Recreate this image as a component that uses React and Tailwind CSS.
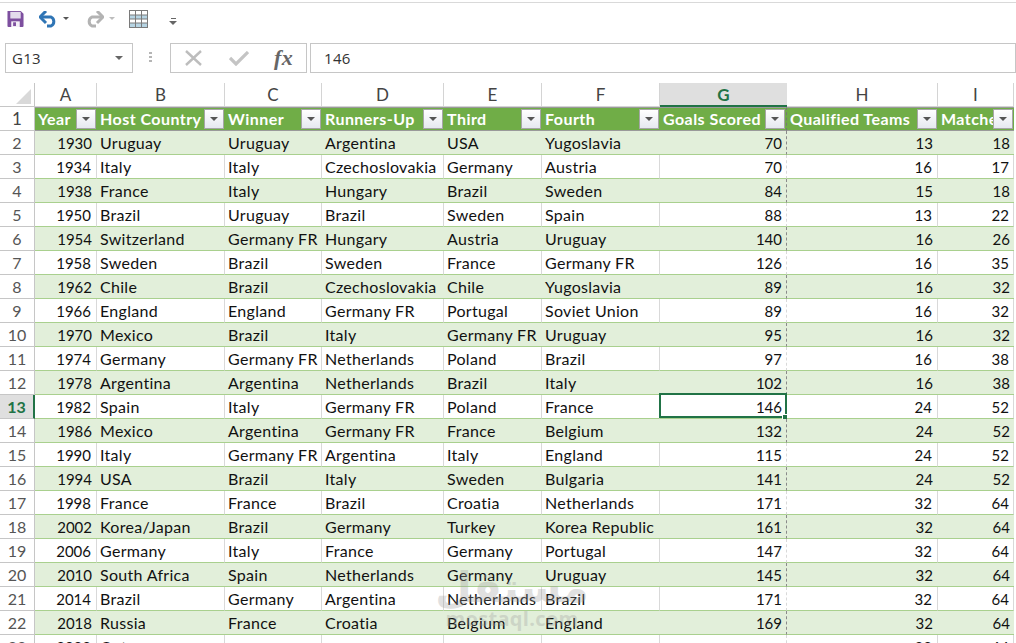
import React from 'react';

const columns = ['A', 'B', 'C', 'D', 'E', 'F', 'G', 'H', 'I'];
const headers = ['Year', 'Host Country', 'Winner', 'Runners-Up', 'Third', 'Fourth', 'Goals Scored', 'Qualified Teams', 'Matches'];
const gridCols = 'grid grid-cols-[35px_62px_128px_97px_122px_98px_118px_127px_151px_76px]';

const rows = [
  [1930, 'Uruguay', 'Uruguay', 'Argentina', 'USA', 'Yugoslavia', 70, 13, 18],
  [1934, 'Italy', 'Italy', 'Czechoslovakia', 'Germany', 'Austria', 70, 16, 17],
  [1938, 'France', 'Italy', 'Hungary', 'Brazil', 'Sweden', 84, 15, 18],
  [1950, 'Brazil', 'Uruguay', 'Brazil', 'Sweden', 'Spain', 88, 13, 22],
  [1954, 'Switzerland', 'Germany FR', 'Hungary', 'Austria', 'Uruguay', 140, 16, 26],
  [1958, 'Sweden', 'Brazil', 'Sweden', 'France', 'Germany FR', 126, 16, 35],
  [1962, 'Chile', 'Brazil', 'Czechoslovakia', 'Chile', 'Yugoslavia', 89, 16, 32],
  [1966, 'England', 'England', 'Germany FR', 'Portugal', 'Soviet Union', 89, 16, 32],
  [1970, 'Mexico', 'Brazil', 'Italy', 'Germany FR', 'Uruguay', 95, 16, 32],
  [1974, 'Germany', 'Germany FR', 'Netherlands', 'Poland', 'Brazil', 97, 16, 38],
  [1978, 'Argentina', 'Argentina', 'Netherlands', 'Brazil', 'Italy', 102, 16, 38],
  [1982, 'Spain', 'Italy', 'Germany FR', 'Poland', 'France', 146, 24, 52],
  [1986, 'Mexico', 'Argentina', 'Germany FR', 'France', 'Belgium', 132, 24, 52],
  [1990, 'Italy', 'Germany FR', 'Argentina', 'Italy', 'England', 115, 24, 52],
  [1994, 'USA', 'Brazil', 'Italy', 'Sweden', 'Bulgaria', 141, 24, 52],
  [1998, 'France', 'France', 'Brazil', 'Croatia', 'Netherlands', 171, 32, 64],
  [2002, 'Korea/Japan', 'Brazil', 'Germany', 'Turkey', 'Korea Republic', 161, 32, 64],
  [2006, 'Germany', 'Italy', 'France', 'Germany', 'Portugal', 147, 32, 64],
  [2010, 'South Africa', 'Spain', 'Netherlands', 'Germany', 'Uruguay', 145, 32, 64],
  [2014, 'Brazil', 'Germany', 'Argentina', 'Netherlands', 'Brazil', 171, 32, 64],
  [2018, 'Russia', 'France', 'Croatia', 'Belgium', 'England', 169, 32, 64],
  [2022, 'Qatar', '', '', '', '', '', 32, 64],
];

const FilterButton = () => (
  <span className="absolute right-[1px] top-[1px] flex h-[20px] w-[20px] items-center justify-center border border-[#a6a6a6] bg-gradient-to-b from-white to-[#e6e9f0]">
    <span className="h-0 w-0 border-x-[4px] border-t-[4px] border-x-transparent border-t-[#555]" />
  </span>
);

const Toolbar = () => (
  <div className="mt-[2px] flex h-[41px] items-start border-t border-[#d9d9d9] pl-[7px] pt-[7px]">
    <svg width="17" height="17" viewBox="0 0 17 18">
      <path d="M0 1h14l3 3v13a1 1 0 0 1-1 1H1a1 1 0 0 1-1-1z" fill="#7d4f9f" />
      <rect x="3" y="2" width="11" height="7" fill="#e3dcec" />
      <rect x="4" y="12" width="9" height="6" fill="#f4f0f7" />
      <rect x="6" y="13" width="3" height="4" fill="#7d4f9f" />
    </svg>
    <svg className="ml-[15px] mt-[1px]" width="19" height="17" viewBox="0 0 19 17" fill="none">
      <path d="M3 6h9a5 5 0 0 1 0 9H8" stroke="#2f75b5" strokeWidth="3" />
      <path d="M7 0 1 6l6 6" stroke="#2f75b5" strokeWidth="3" />
    </svg>
    <span className="ml-[5px] mt-[7px] h-0 w-0 border-x-[3px] border-t-[3px] border-x-transparent border-t-[#555]" />
    <svg className="ml-[16px] mt-[1px]" width="19" height="17" viewBox="0 0 19 17" fill="none">
      <path d="M16 6H7a5 5 0 0 0 0 9h4" stroke="#b3b3b3" strokeWidth="3" />
      <path d="m12 0 6 6-6 6" stroke="#b3b3b3" strokeWidth="3" />
    </svg>
    <span className="ml-[5px] mt-[7px] h-0 w-0 border-x-[3px] border-t-[3px] border-x-transparent border-t-[#bdbdbd]" />
    <svg className="ml-[14px]" width="19" height="18" viewBox="0 0 19 18">
      <rect x="0.5" y="0.5" width="18" height="17" fill="#fff" stroke="#7a7a7a" />
      <path d="M1 5h17v4H1zM1 13h17v4H1z" fill="#b6d4e3" />
      <path d="M0 5h19M0 9h19M0 13h19M6.5 0v18M12.5 0v18" stroke="#7a7a7a" />
    </svg>
    <span className="ml-[21px] mt-[8px] flex flex-col items-center gap-[2px]">
      <span className="h-px w-[5px] bg-[#666]" />
      <span className="h-0 w-0 border-x-[4px] border-t-[4px] border-x-transparent border-t-[#666]" />
    </span>
  </div>
);

const FormulaBar = () => (
  <div className="flex h-[40px] items-start pl-[5px] font-['Open_Sans',sans-serif] text-[15px] text-[#333]">
    <div className="flex h-[30px] w-[128px] items-center justify-between border border-[#c6c6c6] pl-[6px] pr-[9px]">
      <span>G13</span>
      <span className="h-0 w-0 border-x-[4px] border-t-[4px] border-x-transparent border-t-[#666]" />
    </div>
    <div className="ml-[16px] mt-[9px] flex w-[3px] flex-col gap-[2px]">
      <span className="h-[2px] bg-[#b5b5b5]" />
      <span className="h-[2px] bg-[#b5b5b5]" />
      <span className="h-[2px] bg-[#b5b5b5]" />
    </div>
    <div className="ml-[18px] flex h-[30px] w-[137px] items-center border border-[#c6c6c6]">
      <svg className="ml-[14px]" width="17" height="16" viewBox="0 0 17 16" fill="none">
        <path d="M1 1l15 14M16 1 1 15" stroke="#bdbdbd" strokeWidth="2.4" />
      </svg>
      <svg className="ml-[27px]" width="20" height="15" viewBox="0 0 20 15" fill="none">
        <path d="M1 7l6 6L19 1" stroke="#c4c4c4" strokeWidth="3.2" />
      </svg>
      <span className="ml-[25px] font-['Liberation_Serif',serif] text-[22px] font-bold italic leading-none text-[#666]">fx</span>
    </div>
    <div className="ml-[3px] flex h-[30px] flex-1 items-center border border-[#c6c6c6] pl-[13px]">146</div>
  </div>
);

const App = () => (
  <div className="relative h-[643px] w-[1016px] overflow-hidden bg-white font-['Lato',sans-serif] text-[16px] leading-none tracking-[0.3px] text-[#111]">
    <Toolbar />
    <FormulaBar />
    <div className={`${gridCols} h-[24px] items-stretch tracking-normal`}>
      <div className="relative border-b border-r border-[#c6c6c6] bg-white">
        <span className="absolute bottom-[2px] right-[3px] h-0 w-0 border-b-[15px] border-l-[15px] border-b-[#d9d9d9] border-l-transparent" />
      </div>
      {columns.map((c) => (
        <div
          key={c}
          className={c === 'G'
            ? 'flex items-center justify-center border-b-2 border-[#217346] bg-[#dfdfdf] text-[17px] font-bold text-[#217346]'
            : 'flex items-center justify-center border-b border-r border-[#d4d4d4] text-[17px] text-[#444]'}
        >
          {c}
        </div>
      ))}
    </div>
    <div className={`${gridCols} h-[24px]`}>
      <div className="flex items-center justify-center border-b border-r border-[#c6c6c6] text-[17px] tracking-normal text-[#444]">1</div>
      {headers.map((h) => (
        <div
          key={h}
          className={`relative flex items-center overflow-hidden whitespace-nowrap border-y border-[#9a9a9a] bg-[#70ad47] pl-[3px] font-bold tracking-[0.45px] text-white ${h === 'Goals Scored' ? 'border-r border-r-[#777] [border-right-style:dashed]' : ''}`}
        >
          {h}
          <FilterButton />
        </div>
      ))}
    </div>
    {rows.map((row, i) => {
      const rowNum = i + 2;
      const shaded = i % 2 === 0;
      const current = rowNum === 13;
      return (
        <div key={row[0]} className={`${gridCols} h-[24px]`}>
          <div
            className={current
              ? 'flex items-center justify-center border-b border-r-2 border-[#c6c6c6] border-r-[#217346] bg-[#dfdfdf] text-[16px] font-bold tracking-normal text-[#217346]'
              : 'flex items-center justify-center border-b border-r border-[#c6c6c6] text-[16px] tracking-normal text-[#555]'}
          >
            {rowNum}
          </div>
          {row.map((val, j) => {
            const isNum = typeof val === 'number';
            const isG = j === 6;
            return (
              <div
                key={j}
                className={`relative flex items-center whitespace-nowrap border-b border-[#a9d08e] ${isNum || isG ? 'justify-end pt-[1px] text-[15px] tracking-normal' : 'pl-[3px]'} ${isNum || isG ? (j === 0 || j === 7 ? 'pr-[5px]' : 'pr-[4px]') : ''} ${shaded ? 'bg-[#e2efda]' : 'border-r border-r-[#d9d9d9]'} ${isG ? 'border-r border-r-[#8a8a8a] [border-right-style:dashed]' : ''}`}
              >
                {val}
                {current && isG && (
                  <span className="absolute -left-px -right-px -top-[2px] bottom-0 border-2 border-[#217346]">
                    <span className="absolute -bottom-[4px] -right-[3px] h-[6px] w-[6px] border border-white bg-[#217346]" />
                  </span>
                )}
              </div>
            );
          })}
        </div>
      );
    })}
    {/* site watermark */}
    <div className="pointer-events-none absolute left-[447px] top-[568px] flex w-[130px] flex-col items-center text-[#9a9a9a] opacity-30">
      <span className="font-['DejaVu_Sans',sans-serif] text-[42px] font-bold leading-[40px]">مستقل</span>
      <span className="font-['Open_Sans',sans-serif] text-[20px] font-bold leading-[22px]">mostaql.com</span>
    </div>
  </div>
);

export default App;
